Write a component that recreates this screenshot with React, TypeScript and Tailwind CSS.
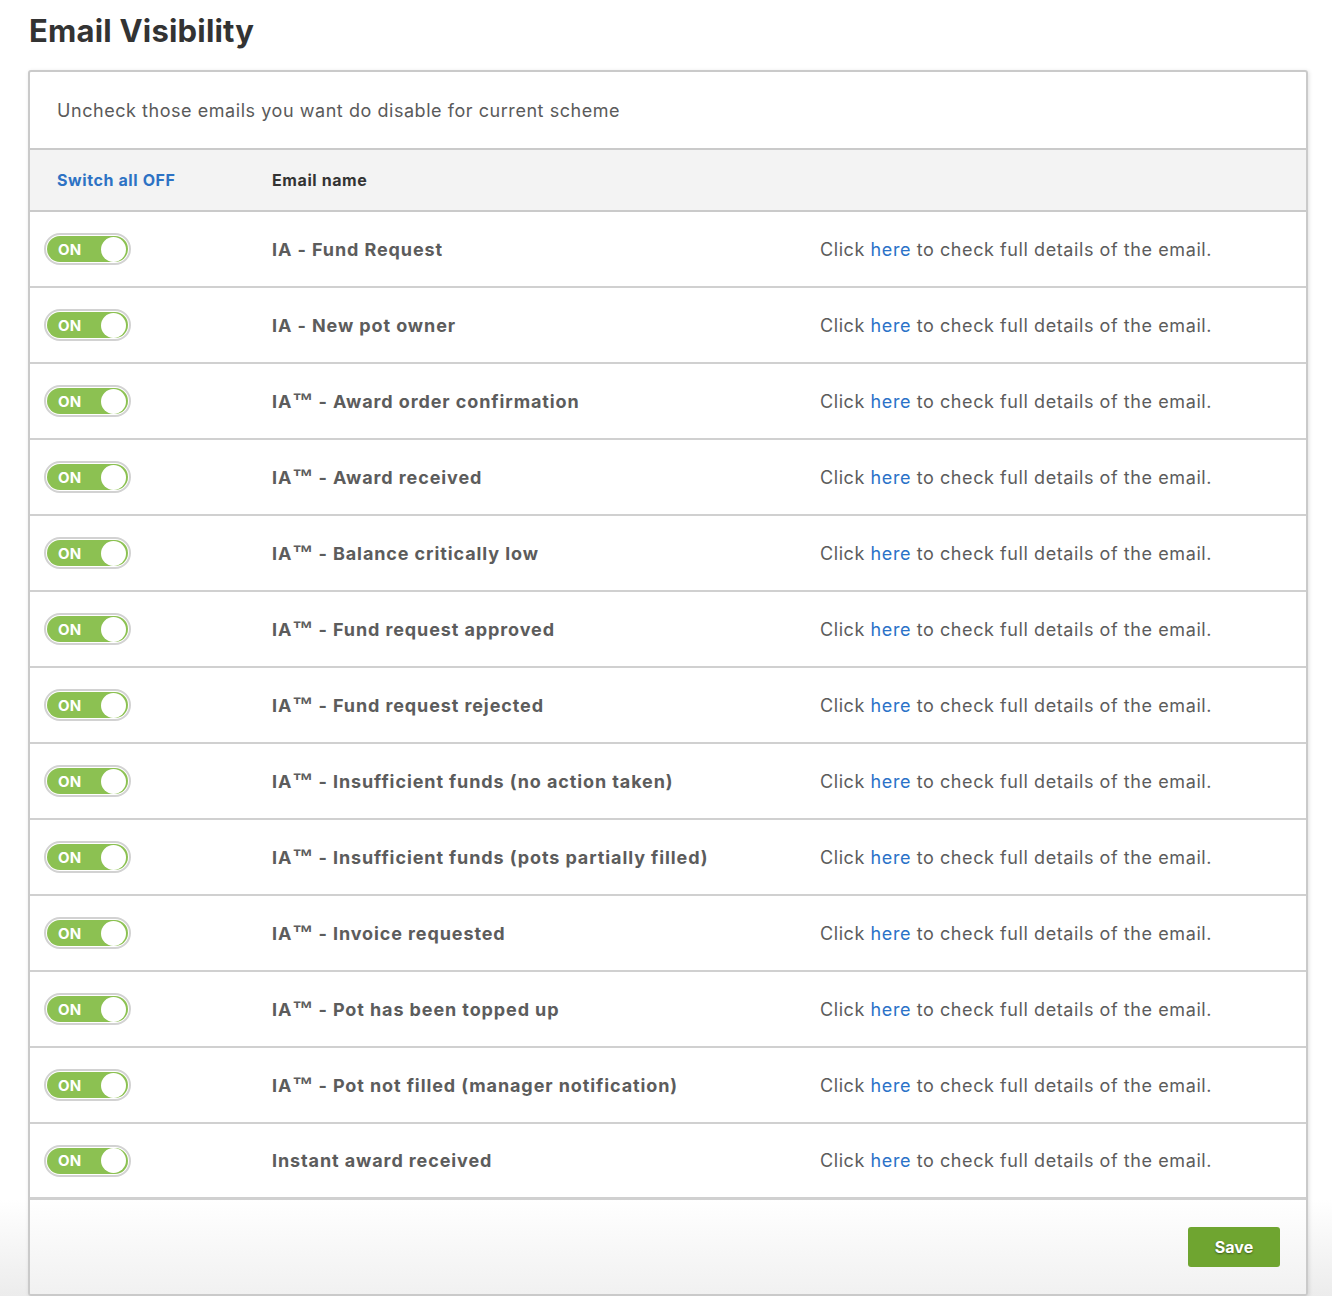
import React, { useState } from "react";

const EMAILS = [
  "IA - Fund Request",
  "IA - New pot owner",
  "IA™ - Award order confirmation",
  "IA™ - Award received",
  "IA™ - Balance critically low",
  "IA™ - Fund request approved",
  "IA™ - Fund request rejected",
  "IA™ - Insufficient funds (no action taken)",
  "IA™ - Insufficient funds (pots partially filled)",
  "IA™ - Invoice requested",
  "IA™ - Pot has been topped up",
  "IA™ - Pot not filled (manager notification)",
  "Instant award received",
];

// the trade mark sign is drawn full size in the original, Inter shrinks it
function EmailName({ name }: { name: string }) {
  const parts = name.split("™");
  if (parts.length === 1) return <>{name}</>;
  return (
    <>
      {parts[0]}
      <span
        style={{ fontFamily: '"Liberation Sans", sans-serif' }}
        className="text-[21px] leading-none tracking-normal font-bold"
      >
        ™
      </span>
      {parts[1]}
    </>
  );
}

function Toggle({ on, onClick }: { on: boolean; onClick: () => void }) {
  return (
    <button
      onClick={onClick}
      className="w-[87px] h-[32px] rounded-full border-2 border-[#d2d2d2] p-[1px] bg-white"
    >
      <div
        className={`flex items-center h-full w-full rounded-full ${
          on ? "bg-[#8cc152] justify-between" : "bg-[#c8c8c8] flex-row-reverse justify-between"
        }`}
      >
        <span className="pl-[11px] pr-[10px] text-[15px] font-bold text-white leading-none tracking-[0.3px]">
          {on ? "ON" : "OFF"}
        </span>
        <span className="w-[25px] h-[25px] rounded-full bg-white mx-[2px]" />
      </div>
    </button>
  );
}

export default function App() {
  const [states, setStates] = useState(EMAILS.map(() => true));

  const toggle = (i: number) => setStates(prev => prev.map((s, j) => (j === i ? !s : s)));

  return (
    <div
      className="min-h-[1296px] bg-[linear-gradient(to_bottom,#ffffff_1200px,#ececec_1296px)] pt-[12px] pl-[28px] pr-[24px] text-[#5c5c5c]"
      style={{ fontFamily: 'Inter, "Helvetica Neue", "Liberation Sans", sans-serif' }}
    >
      <h1 className="text-[31px] font-bold text-[#333] leading-[38px] ml-[1px] tracking-[0.2px]">
        Email Visibility
      </h1>

      <div className="mt-[20px] border-2 border-[#cacaca] rounded-[3px] shadow-[1px_1px_4px_rgba(0,0,0,0.12)] overflow-hidden">
        <div className="h-[78px] flex items-center px-[27px] pt-[1px] text-[18px] text-[#5a5a5a] tracking-[0.55px] border-b-2 border-[#cacaca]">
          Uncheck those emails you want do disable for current scheme
        </div>

        <div className="h-[62px] flex items-center bg-[#f3f3f3] border-b-2 border-[#cacaca] text-[16px] font-bold tracking-[0.6px]">
          <button
            onClick={() => setStates(EMAILS.map(() => false))}
            className="w-[242px] pl-[27px] text-left text-[#2d72c4] tracking-[0.6px]"
          >
            Switch all OFF
          </button>
          <span className="text-[#333]">Email name</span>
        </div>

        {EMAILS.map((name, i) => (
          <div
            key={name}
            className={`h-[76px] flex items-center ${
              i === EMAILS.length - 1 ? "border-b-[3px]" : "border-b-2"
            } border-[#d0d0d0]`}
          >
            <div className="w-[242px] pl-[14px]">
              <Toggle on={states[i]} onClick={() => toggle(i)} />
            </div>
            <div className="w-[548px] text-[18px] font-bold text-[#5c5c5c] tracking-[0.9px]">
              <EmailName name={name} />
            </div>
            <div className="text-[18px] text-[#5c5c5c] tracking-[0.58px]">
              Click <a className="text-[#2a72c8] cursor-pointer">here</a> to check full details of the email.
            </div>
          </div>
        ))}

        <div className="h-[94px] flex justify-end items-start pt-[27px] pr-[26px] bg-[linear-gradient(to_bottom,#ffffff,#f1f1f1)]">
          <button className="w-[92px] h-[40px] rounded-[3px] bg-[#6fa530] text-white text-[16px] font-bold [text-shadow:0_1px_2px_rgba(0,0,0,0.45)]">
            Save
          </button>
        </div>
      </div>
    </div>
  );
}
